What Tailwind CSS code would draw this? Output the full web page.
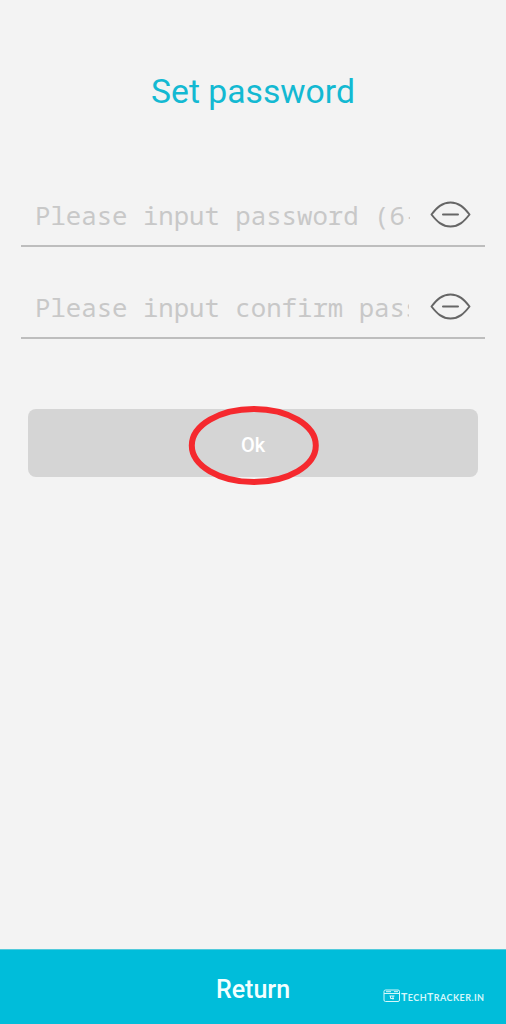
<!DOCTYPE html>
<html lang="en">
<head>
<meta charset="utf-8">
<title>Set password</title>
<script src="https://cdn.jsdelivr.net/npm/@tailwindcss/browser@4"></script>
</head>
<body class="bg-[#f3f3f3] font-['Roboto',sans-serif]">
<main class="flex h-[1024px] w-[506px] flex-col overflow-hidden">
  <h1 class="mt-[70px] h-11 text-center text-[33.7px] leading-[44px] text-[#13b9d2]"><span class="whitespace-nowrap">Set password</span></h1>
  <form class="mx-[21px] mt-[71px] flex flex-col">
    <label class="flex h-[62px] items-center border-b-2 border-[#bdbdbd] pl-3.5">
      <span class="w-[375px] overflow-hidden whitespace-nowrap pt-px font-['Noto_Sans_Mono','DejaVu_Sans_Mono',monospace] text-[25.7px] leading-[36px] text-[#c8c8c8]">Please input password (6-</span>
      <svg class="ml-5 h-7 w-[42px] shrink-0 -translate-y-px" viewBox="0 0 42 28" fill="none" stroke="#666" stroke-width="2" stroke-linecap="round" stroke-linejoin="round"><path d="M1.5 14.500C7 7.500 12 2.500 20.500 2.500S34 7.500 39.500 14.500C34 21.500 29 26.500 20.500 26.500S7 21.500 1.500 14.500ZM13 14.500H28"/></svg>
    </label>
    <label class="mt-[30px] flex h-[62px] items-center border-b-2 border-[#bdbdbd] pl-3.5">
      <span class="w-[374px] overflow-hidden whitespace-nowrap pt-px font-['Noto_Sans_Mono','DejaVu_Sans_Mono',monospace] text-[25.7px] leading-[36px] text-[#c8c8c8]">Please input confirm password</span>
      <svg class="ml-[21px] h-7 w-[42px] shrink-0 -translate-y-px" viewBox="0 0 42 28" fill="none" stroke="#666" stroke-width="2" stroke-linecap="round" stroke-linejoin="round"><path d="M1.5 14.500C7 7.500 12 2.500 20.500 2.500S34 7.500 39.500 14.500C34 21.500 29 26.500 20.500 26.500S7 21.500 1.500 14.500ZM13 14.500H28"/></svg>
    </label>
    <button type="button" class="relative mx-[7px] mt-[70px] h-[68px] w-[450px] rounded-lg bg-[#d5d5d5] pt-[3px] text-[20px] font-medium text-white">Ok
      <svg class="absolute -top-[3px] left-[160px] h-20 w-[132px]" viewBox="0 0 132 80" fill="none" stroke="#f5292e" stroke-width="6"><ellipse cx="65.800" cy="39.500" rx="62" ry="36.500"/></svg>
    </button>
  </form>
  <footer class="relative mt-auto flex h-[75px] items-center justify-center border-t border-[#51cadb] bg-[#00bdda] text-[25px] font-medium text-[#f2ffff]">
    <span class="pt-1.5">Return</span>
    <div class="absolute left-[383px] top-[38px] flex h-4 items-center">
      <svg class="h-[14px] w-[18px]" viewBox="0 0 18 14" fill="none" stroke="#d5f7fa"><rect x="1" y="1" width="15.500" height="11.500" rx="1.500"/><path d="M1 4.500H16.500M3 2.700H8M11 2.700H15M6.500 7H11.500M7.500 7V9.500H11M10 7V10.500"/></svg>
      <span class="whitespace-nowrap pt-0.5 font-['Lato',sans-serif] text-[10.500px] font-bold uppercase leading-4 tracking-[0.450px] text-[#d5f7fa]">T<span class="text-[9px]">ech</span>T<span class="text-[9px]">racker.in</span></span>
    </div>
  </footer>
</main>
</body>
</html>
